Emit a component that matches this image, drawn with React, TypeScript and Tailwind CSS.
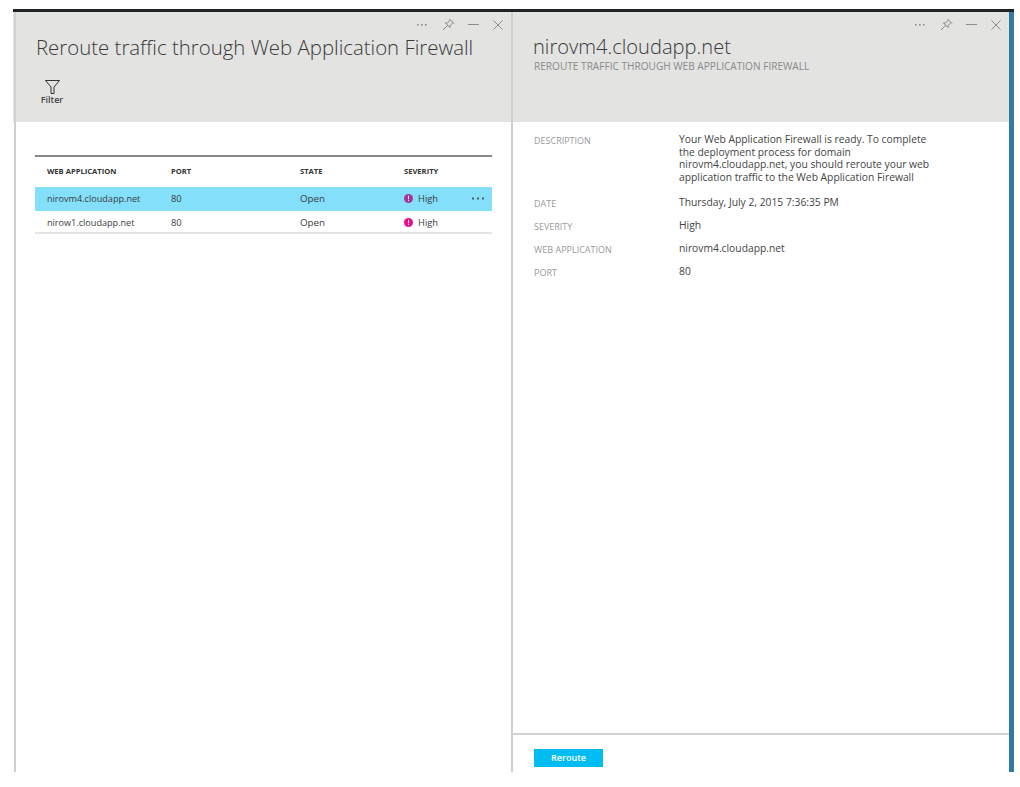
import React from 'react';

const font = { fontFamily: '"Open Sans", "Noto Sans", sans-serif' };

function Controls({ className }: { className: string }) {
  return (
    <div className={`flex items-center ${className}`}>
      <svg width="10" height="4" viewBox="0 0 10 4" className="mr-[15px]" fill="#8c8c8c">
        <rect x="0" y="1" width="1.6" height="1.6" />
        <rect x="4" y="1" width="1.6" height="1.6" />
        <rect x="8" y="1" width="1.6" height="1.6" />
      </svg>
      <svg width="13" height="13" viewBox="0 0 13 13" fill="none" stroke="#858585" strokeWidth="1" className="mr-[13px]">
        <path d="M7.5 1 L12 5.5 M8.5 2 L5.5 4.8 L3.5 5 L8 9.5 L8.2 7.5 L11 4.5 M5.7 7.3 L1 12" />
      </svg>
      <svg width="11" height="3" viewBox="0 0 11 3" stroke="#8c8c8c" className="mr-[14px]">
        <path d="M0 1.5 H11" />
      </svg>
      <svg width="10" height="10" viewBox="0 0 10 10" stroke="#8c8c8c" fill="none">
        <path d="M0.5 0.5 L9.5 9.5 M9.5 0.5 L0.5 9.5" />
      </svg>
    </div>
  );
}

function Alert({ color }: { color: string }) {
  return (
    <svg width="9" height="9" viewBox="0 0 9 9" className="mr-[5px] shrink-0">
      <circle cx="4.5" cy="4.5" r="4.5" fill={color} />
      <rect x="4" y="1.7" width="1" height="3.6" fill="#fff" />
      <rect x="4" y="6" width="1" height="1.2" fill="#fff" />
    </svg>
  );
}

function Row({ name, sel, color }: { name: string; sel?: boolean; color: string }) {
  return (
    <div className={`grid grid-cols-[124px_129px_104px_1fr] items-center pl-[12px] text-[9.1px] text-[#3c3c3c] ${sel ? 'h-[24px] bg-[#83dffa]' : 'h-[23px] border-b-2 border-[#e4e4e4] pt-[3px]'}`}>
      <span>{name}</span>
      <span className="text-[9.4px]">80</span>
      <span className="text-[9.8px]">Open</span>
      <div className="flex items-center pr-[8px]">
        <Alert color={color} />
        <span className="text-[9.4px]">High</span>
        {sel && (
          <svg width="12" height="3" viewBox="0 0 12 3" fill="#45606b" className="ml-auto">
            <rect x="0" y="0.5" width="2" height="2" />
            <rect x="5" y="0.5" width="2" height="2" />
            <rect x="10" y="0.5" width="2" height="2" />
          </svg>
        )}
      </div>
    </div>
  );
}

function Field({ label, children, cls }: { label: string; children: React.ReactNode; cls: string }) {
  return (
    <div className={`grid grid-cols-[145px_1fr] ${cls}`}>
      <span className="text-[9px] leading-[12px] text-[#9a9a9a] pt-[2px]">{label}</span>
      <div className="text-[10.3px] leading-[12.6px] text-[#444]">{children}</div>
    </div>
  );
}

export default function App() {
  return (
    <div className="w-[1020px] h-[787px] bg-white pt-[9px] overflow-hidden" style={font}>
      <div className="ml-[13px] w-[1001px] h-[763px] border-t-[3px] border-[#1f2326] flex">
        <div className="w-[498px] flex flex-col">
          <div className="relative h-[110px] bg-[#e3e3e2] shrink-0 pl-[23px]">
            <div className="absolute left-[1px] top-0 bottom-0 w-[2px] bg-[#d2d2d2]" />
            <Controls className="absolute top-[6px] right-[8px]" />
            <h1 className="pt-[21px] text-[20.4px] leading-[28px] font-light text-[#3a3a3a] whitespace-nowrap">Reroute traffic through Web Application Firewall</h1>
            <div className="mt-[19px] ml-[4px] w-[24px] flex flex-col items-center">
              <svg width="15" height="14" viewBox="0 0 15 14" fill="none" stroke="#333" strokeWidth="1">
                <path d="M0.5 0.5 H14.5 L9 7 V13.5 H6 V7 Z" />
              </svg>
              <span className="text-[9px] leading-[11px] font-semibold text-[#444]">Filter</span>
            </div>
          </div>
          <div className="flex-1 ml-[1px] border-l-2 border-[#cfcfcf] pl-[19px] pr-[19px] pt-[33px]">
            <div className="border-t-2 border-[#888]">
              <div className="grid grid-cols-[124px_129px_104px_1fr] items-center pl-[12px] h-[30px] text-[7.6px] font-bold text-[#333]">
                <span>WEB APPLICATION</span>
                <span>PORT</span>
                <span>STATE</span>
                <span>SEVERITY</span>
              </div>
              <Row name="nirovm4.cloudapp.net" sel color="#a8329c" />
              <Row name="nirow1.cloudapp.net" color="#ec0c8c" />
            </div>
          </div>
        </div>
        <div className="w-[2px] bg-[#cfcfcf] shrink-0" />
        <div className="flex-1 flex flex-col">
          <div className="relative h-[110px] bg-[#e3e3e2] shrink-0 pl-[20px] pt-[22px]">
            <Controls className="absolute top-[6px] right-[8px]" />
            <h2 className="text-[20.1px] leading-[26px] font-light text-[#3a3a3a]">nirovm4.cloudapp.net</h2>
            <p className="pl-[1px] mt-[1px] text-[10.1px] leading-[11px] text-[#8a8a8a]">REROUTE TRAFFIC THROUGH WEB APPLICATION FIREWALL</p>
          </div>
          <div className="flex-1 pl-[21px] pt-[11px]">
            <Field label="DESCRIPTION" cls="mb-[13px]">
              <div className="whitespace-nowrap">
                Your Web Application Firewall is ready. To complete<br />
                the deployment process for domain<br />
                nirovm4.cloudapp.net, you should reroute your web<br />
                application traffic to the Web Application Firewall
              </div>
            </Field>
            <Field label="DATE" cls="mb-[9px]">Thursday, July 2, 2015 7:36:35 PM</Field>
            <Field label="SEVERITY" cls="mb-[9px]">High</Field>
            <Field label="WEB APPLICATION" cls="mb-[9px]">nirovm4.cloudapp.net</Field>
            <Field label="PORT" cls="">80</Field>
          </div>
          <div className="h-[39px] border-t-2 border-[#d2d2d2] pl-[21px] pt-[14px] shrink-0">
            <div className="w-[69px] h-[18px] bg-[#00bcf2] flex items-center justify-center text-[9px] font-semibold text-white">Reroute</div>
          </div>
        </div>
        <div className="w-[5px] bg-[#2f7ba3] shrink-0" />
      </div>
    </div>
  );
}
